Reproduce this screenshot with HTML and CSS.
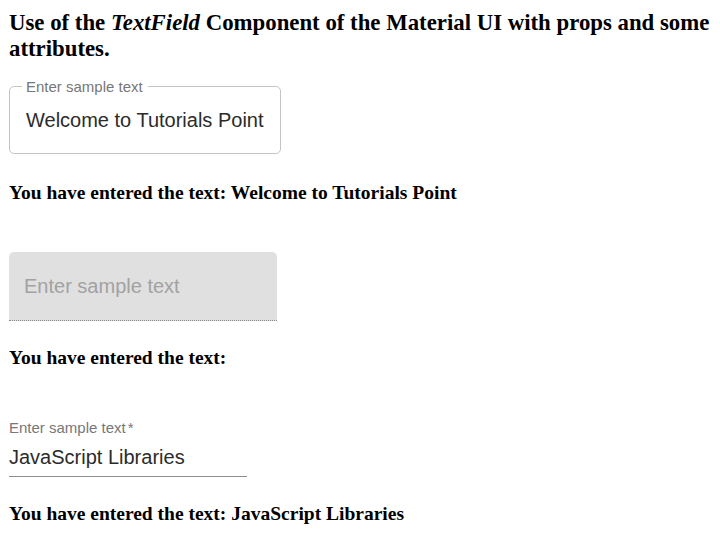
FILE: index.html
```html
<!DOCTYPE html>
<html lang="en">

<head>
    <meta charset="UTF-8">
    <meta name="viewport" content="width=device-width, initial-scale=1.0">
    <title>TextField</title>
    <link rel="stylesheet" href="styles.css">
</head>

<body>
    <div id="page">
        <h3 class="title">Use of the <i>TextField</i> Component of the Material UI with props and some attributes.</h3>

        <!-- outlined variant -->
        <div class="field outlined">
            <span class="floating">Enter sample text</span>
            <span class="value">Welcome to Tutorials Point</span>
        </div>
        <h4 class="result first">You have entered the text: Welcome to Tutorials Point</h4>

        <!-- filled variant, disabled -->
        <div class="field filled">
            <span class="placeholder">Enter sample text</span>
        </div>
        <h4 class="result">You have entered the text:</h4>

        <!-- standard variant, required -->
        <div class="field standard">
            <span class="label">Enter sample text<span class="star">*</span></span>
            <span class="value">JavaScript Libraries</span>
        </div>
        <h4 class="result">You have entered the text: JavaScript Libraries</h4>
    </div>
</body>

</html>
```

FILE: styles.css
```css
html, body {
    margin: 0;
    background-color: #ffffff;
    color: #000000;
}

#page {
    padding: 10px 9px;
    font-family: "Liberation Serif", "Times New Roman", serif;
}

.title {
    margin: 0;
    font-size: 22.8px;
    font-weight: bold;
    line-height: normal;
}

.result {
    margin: 26px 0 0 0;
    font-size: 19.5px;
    font-weight: bold;
    line-height: normal;
}

.result.first {
    margin-top: 28px;
}

.field {
    font-family: "Liberation Sans", Arial, sans-serif;
    box-sizing: border-box;
}

.value {
    display: block;
    font-size: 20px;
    line-height: 24px;
    color: #2b2b2b;
}

/* outlined */
.outlined {
    position: relative;
    width: 272px;
    height: 68px;
    margin-top: 24px;
    padding: 21px 16px 0 16px;
    border: 1px solid #c4c4c4;
    border-radius: 5px;
}

.floating {
    position: absolute;
    top: -9px;
    left: 12px;
    padding: 0 5px 0 4px;
    background-color: #ffffff;
    font-size: 15px;
    line-height: 17px;
    color: #777777;
}

/* filled */
.filled {
    width: 268px;
    height: 69px;
    margin-top: 48px;
    padding: 0 15px;
    display: flex;
    align-items: center;
    background-color: #e0e0e0;
    border-bottom: 1px dotted #8a8a8a;
    border-radius: 5px 5px 0 0;
}

.placeholder {
    font-size: 20px;
    line-height: 24px;
    color: #a2a2a2;
}

/* standard */
.standard {
    width: 238px;
    margin-top: 50px;
    padding-bottom: 7px;
    border-bottom: 1px solid #8f8f8f;
}

.label {
    display: block;
    font-size: 15px;
    line-height: 17px;
    color: #777777;
    margin-bottom: 9px;
}

.star {
    margin-left: 2px;
}
```
